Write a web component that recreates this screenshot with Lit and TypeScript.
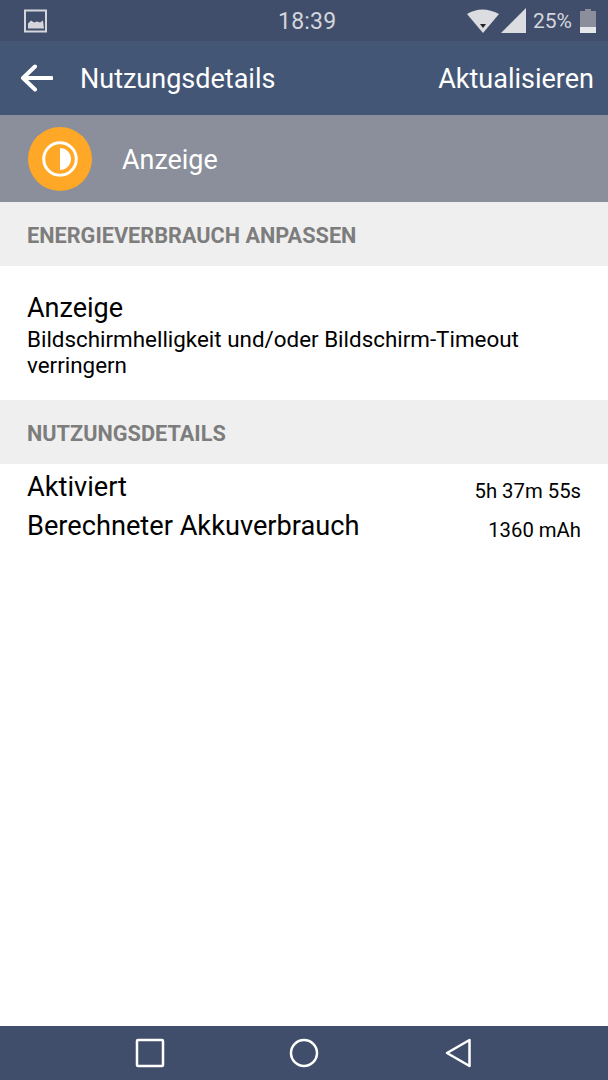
import { LitElement, html, css } from "lit";
import { customElement } from "lit/decorators.js";

@customElement("app-root")
export class AppRoot extends LitElement {
  static styles = css`
    :host { display: block; width: 608px; height: 1080px; font-family: Roboto, "Liberation Sans", sans-serif; background: #fff; }
    .page { display: flex; flex-direction: column; height: 1080px; }
    .status { height: 41px; background: #404e6b; display: flex; align-items: center; padding: 0 12px 0 24px; color: #d4d6dc; position: relative; flex: none; }
    .time { position: absolute; left: 278px; top: 8px; font-size: 23px; line-height: 27px; letter-spacing: 0.2px; }
    .status-right { margin-left: auto; display: flex; align-items: center; }
    .pct { font-size: 21px; line-height: 26px; margin: 0 8px 0 7px; }
    .toolbar { height: 74px; background: #445675; display: flex; align-items: center; color: #fff; padding: 0 14px 0 20px; flex: none; }
    .toolbar svg { margin-right: 27px; }
    .title { font-size: 27px; padding-top: 2px; }
    .action { margin-left: auto; font-size: 27px; padding-top: 2px; }
    .app { height: 87px; background: #8a8f9b; display: flex; align-items: center; padding-left: 28px; color: #fff; flex: none; }
    .badge { width: 64px; height: 64px; border-radius: 50%; background: #ffa726; display: flex; align-items: center; justify-content: center; margin-right: 30px; }
    .appname { font-size: 26.9px; padding-top: 2px; }
    .head { background: #efefef; height: 64px; display: flex; align-items: center; padding: 3px 0 0 27px; box-sizing: border-box; color: #7d7d7d; font-size: 21.7px; font-weight: 700; flex: none; }
    .suggest { height: 134px; padding: 27px 27px 0; box-sizing: border-box; color: #000; flex: none; }
    .s-title { font-size: 27px; line-height: 30px; }
    .s-text { font-size: 22.4px; line-height: 26px; margin-top: 3px; }
    .rows { padding: 4px 27px 0; flex: 1; }
    .row { display: flex; justify-content: space-between; align-items: flex-start; height: 39px; color: #000; }
    .label { font-size: 27.2px; line-height: 39px; }
    .val { font-size: 20.3px; line-height: 39px; margin-top: 4px; }
    .nav { height: 54px; background: #404e6b; display: flex; align-items: center; position: relative; flex: none; }
    .nav svg { position: absolute; top: 12px; }
  `;

  render() {
    return html`<div class="page">
      <div class="status">
        <svg width="24" height="24" viewBox="0 0 24 24"><rect x="1" y="1.500" width="21" height="21" fill="none" stroke="#d4d6dc" stroke-width="2"/><path d="M4 19.500v-5l3-3 3 2 3-1 3 1 3-2 1 8z" fill="#d4d6dc"/></svg>
        <span class="time">18:39</span>
        <div class="status-right">
          <svg width="32" height="26" viewBox="0 0 32 26"><path d="M0 6Q15-3 32 6L16 25z" fill="#dcdde0"/><path d="M13 16h6l-3 4z" fill="#222"/></svg>
          <svg width="25" height="25" viewBox="0 0 25 25" style="margin-left:2px"><path d="M25 0V25H0z" fill="#dcdde0"/></svg>
          <span class="pct">25%</span>
          <svg width="16" height="24" viewBox="0 0 16 24"><path d="M5 0h6v2h5v22H0V2h5z" fill="#8a8f9b"/><rect y="18" width="16" height="6" fill="#e6e7ea"/></svg>
        </div>
      </div>
      <div class="toolbar">
        <svg width="33" height="30" viewBox="0 0 33 30"><path d="M31.500 15H3M15 3.500L3 15l12 11.500" fill="none" stroke="#fff" stroke-width="4" stroke-linecap="round" stroke-linejoin="round"/></svg>
        <span class="title">Nutzungsdetails</span>
        <span class="action">Aktualisieren</span>
      </div>
      <div class="app">
        <div class="badge"><svg width="36" height="36" viewBox="0 0 36 36"><circle cx="18" cy="18" r="16.250" fill="none" stroke="#fff" stroke-width="3"/><path d="M18 7a11 11 0 0 1 0 22z" fill="#fff"/></svg></div>
        <span class="appname">Anzeige</span>
      </div>
      <div class="head">ENERGIEVERBRAUCH ANPASSEN</div>
      <div class="suggest">
        <div class="s-title">Anzeige</div>
        <div class="s-text">Bildschirmhelligkeit und/oder Bildschirm-Timeout verringern</div>
      </div>
      <div class="head">NUTZUNGSDETAILS</div>
      <div class="rows">
        <div class="row"><span class="label">Aktiviert</span><span class="val">5h 37m 55s</span></div>
        <div class="row"><span class="label">Berechneter Akkuverbrauch</span><span class="val">1360 mAh</span></div>
      </div>
      <div class="nav">
        <svg style="left:135px" width="30" height="30" viewBox="0 0 30 30"><rect x="2" y="2" width="26" height="26" rx="1" fill="none" stroke="#fff" stroke-width="2.500"/></svg>
        <svg style="left:289px" width="30" height="30" viewBox="0 0 30 30"><circle cx="15" cy="15" r="13" fill="none" stroke="#fff" stroke-width="2.500"/></svg>
        <svg style="left:445px" width="28" height="30" viewBox="0 0 28 30"><path d="M24.500 2V28L2 15z" fill="none" stroke="#fff" stroke-width="2.500" stroke-linejoin="round"/></svg>
      </div>
    </div>`;
  }
}
